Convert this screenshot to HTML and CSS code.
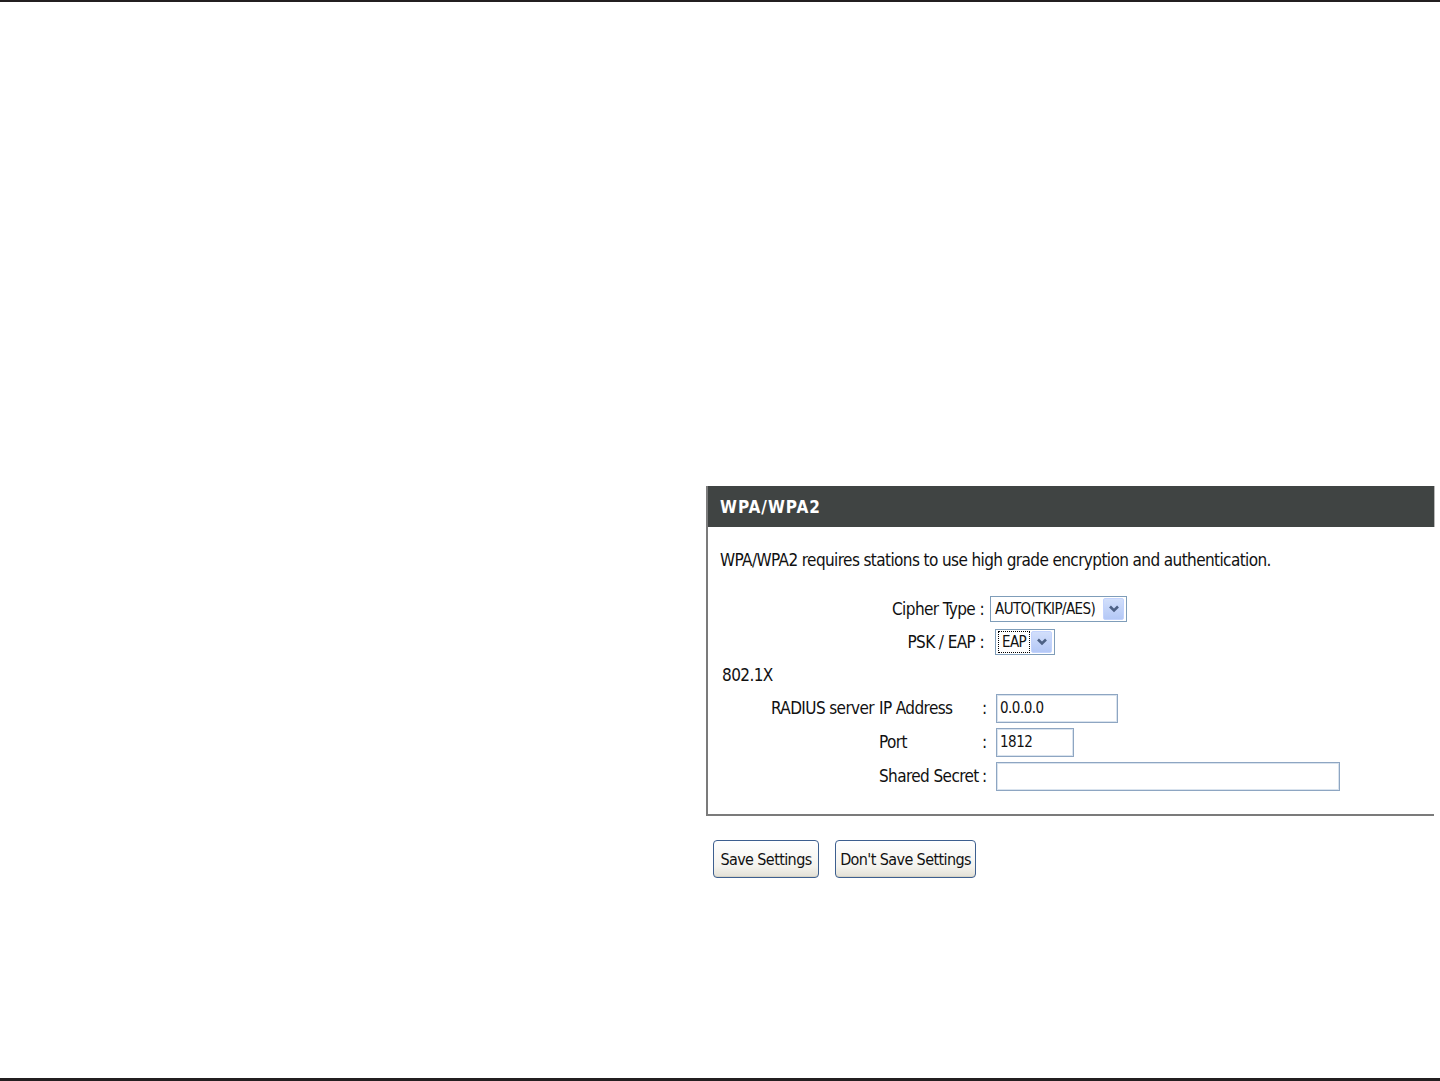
FILE: index.html
```
<html lang="en">

<head>
	<meta charset="UTF-8">
	<title>WPA/WPA2</title>
	<link rel="stylesheet" href="styles.css">
</head>

<body>
	<div class="top-rule"></div>
	<div class="page">
		<div class="panel">
			<div class="panel-head">WPA/WPA2</div>
			<div class="panel-body">
				<div class="desc">WPA/WPA2 requires stations to use high grade encryption and authentication.</div>
				<div class="rows">
					<div class="row">
						<div class="label">Cipher Type :</div>
						<div class="select" id="cipher-select">
							<span class="select-text">AUTO(TKIP/AES)</span>
							<span class="select-btn"><svg width="12" height="10" viewBox="0 0 12 10"><path d="M2 2.5 L6 6.5 L10 2.5" fill="none" stroke="#4d6185" stroke-width="2.6"/></svg></span>
						</div>
					</div>
					<div class="row">
						<div class="label">PSK / EAP :</div>
						<div class="select select-small" id="psk-select">
							<span class="select-text focus">EAP</span>
							<span class="select-btn"><svg width="12" height="10" viewBox="0 0 12 10"><path d="M2 2.5 L6 6.5 L10 2.5" fill="none" stroke="#4d6185" stroke-width="2.6"/></svg></span>
						</div>
					</div>
					<div class="row section">802.1X</div>
					<div class="radius">
						<div class="r-cell">RADIUS server</div>
						<div class="r-cell">IP Address</div>
						<div class="r-cell colon">:</div>
						<div class="r-cell"><input class="field field-ip" type="text" value="0.0.0.0"></div>

						<div class="r-cell"></div>
						<div class="r-cell">Port</div>
						<div class="r-cell colon">:</div>
						<div class="r-cell"><input class="field field-port" type="text" value="1812"></div>

						<div class="r-cell"></div>
						<div class="r-cell">Shared Secret</div>
						<div class="r-cell colon">:</div>
						<div class="r-cell"><input class="field field-secret" type="text" value=""></div>
					</div>
				</div>
			</div>
		</div>
		<div class="buttons">
			<button class="button btn-save">Save Settings</button>
			<button class="button btn-cancel">Don't Save Settings</button>
		</div>
	</div>
	<div class="bottom-rule"></div>
</body>

</html>
```

FILE: styles.css
```
body {
	background: #fff;
	margin: 0;
	padding: 0;
	height: 1081px;
	position: relative;
	overflow: hidden;
	font-family: "DejaVu Sans Condensed", "DejaVu Sans", sans-serif;
	font-size: 17px;
	letter-spacing: -0.6px;
	white-space: nowrap;
	color: #111;
}

.top-rule {
	height: 2px;
	background: #231f20;
}

.bottom-rule {
	position: absolute;
	left: 0;
	right: 0;
	bottom: 0;
	height: 3px;
	background: #231f20;
}

.page {
	padding-top: 484px;
	padding-left: 706px;
}

.panel {
	width: 726px;
	border-left: 2px solid #7b7b7b;
	border-bottom: 2px solid #7b7b7b;
}

.panel-head {
	height: 41px;
	line-height: 42px;
	background: #404443;
	color: #fff;
	font-weight: bold;
	letter-spacing: 1px;
	padding-left: 12px;
	box-shadow: 1px 0 0 #b8b8b8;
}

.panel-body {
	padding: 17px 0 21px 12px;
}

.desc {
	line-height: 33px;
}

.rows {
	margin-top: 15px;
}

.row {
	display: flex;
	align-items: center;
	height: 33px;
}

.label {
	width: 264px;
	text-align: right;
	padding-right: 6px;
}

.section {
	padding-left: 2px;
}

.select {
	display: flex;
	align-items: center;
	height: 24px;
	border: 1px solid #7f9db9;
	background: #fff;
	padding: 0 2px 0 3px;
	font-size: 15px;
}

.select-small {
	margin-left: 5px;
}

.select-text {
	padding: 0 6px 0 1px;
	line-height: 20px;
}

.select-text.focus {
	outline: 1px dotted #000;
	padding: 0 3px;
}

.select-btn {
	display: flex;
	align-items: center;
	justify-content: center;
	width: 19px;
	height: 20px;
	margin-left: 2px;
	background: linear-gradient(#d2dffb, #b4c8f6);
	border: 1px solid #c3d3fd;
	border-radius: 2px;
}

.radius {
	display: grid;
	grid-template-columns: 108px 101px 16px auto;
	grid-auto-rows: 34px;
	align-items: center;
	margin-left: 51px;
}

.colon {
	text-align: left;
	padding-left: 2px;
}

.field {
	font-family: "DejaVu Sans Condensed", "DejaVu Sans", sans-serif;
	font-size: 15px;
	letter-spacing: -0.5px;
	height: 29px;
	border: 1px solid #8ea6c2;
	box-shadow: inset 0 0 0 1px #d9e3ee;
	padding: 0 3px;
	margin: 0;
	color: #111;
	box-sizing: border-box;
}

.field-ip {
	width: 122px;
}

.field-port {
	width: 78px;
}

.field-secret {
	width: 344px;
}

.buttons {
	display: flex;
	gap: 16px;
	padding-top: 24px;
	padding-left: 7px;
}

.button {
	font-family: "DejaVu Sans Condensed", "DejaVu Sans", sans-serif;
	font-size: 16px;
	letter-spacing: -0.6px;
	white-space: nowrap;
	height: 38px;
	padding: 0;
	color: #111;
	border: 1px solid #3d5f8f;
	border-radius: 4px;
	background: linear-gradient(#ffffff, #f4f3ee 70%, #e2e0d6);
	box-shadow: inset 0 -1px 0 #d6d3c6;
	cursor: pointer;
}

.btn-save {
	width: 106px;
}

.btn-cancel {
	width: 141px;
}
```
